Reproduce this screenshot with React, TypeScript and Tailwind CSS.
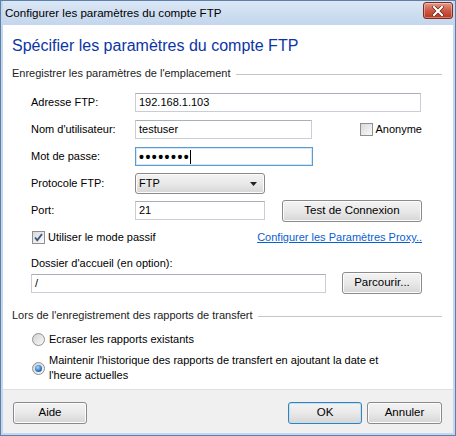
import React from "react";

const font = "font-['Liberation_Sans',Arial,sans-serif]";

function TextBox({ w, value, focused }: { w: string; value?: React.ReactNode; focused?: boolean }) {
  return (
    <div
      className={`${w} h-[19px] flex items-center px-[3px] bg-white border ${
        focused ? "border-[#5a9bd5] shadow-[inset_0_0_0_1px_#d6e8f7]" : "border-[#c9ced6] border-t-[#abb0b8]"
      }`}
    >
      {value}
    </div>
  );
}

function Button({ w, h = "h-[22px]", children, primary }: { w: string; h?: string; children: React.ReactNode; primary?: boolean }) {
  return (
    <button
      className={`${w} ${h} flex items-center justify-center rounded-[3px] border ${
        primary ? "border-[#3c7fb1] shadow-[inset_0_0_0_1px_#bfe1f7]" : "border-[#8a8a8a] shadow-[inset_0_0_0_1px_#fcfcfc]"
      } bg-gradient-to-b from-[#f3f3f3] via-[#e9e9e9] to-[#d6d6d6] text-[11.5px] text-black`}
    >
      {children}
    </button>
  );
}

function CheckBox({ checked }: { checked?: boolean }) {
  return (
    <span className="w-[13px] h-[13px] shrink-0 border border-[#8f8f8f] bg-gradient-to-br from-[#d9d9d9] to-[#fbfbfb] flex items-center justify-center">
      {checked && (
        <svg width="11" height="11" viewBox="0 0 11 11">
          <path d="M2 5.5 L4.3 8.2 L9 2" fill="none" stroke="#3b5488" strokeWidth="1.8" />
        </svg>
      )}
    </span>
  );
}

function Radio({ checked }: { checked?: boolean }) {
  return (
    <span className="w-[13px] h-[13px] shrink-0 rounded-full border border-[#8f8f8f] bg-gradient-to-br from-[#d2d2d2] to-[#fafafa] flex items-center justify-center">
      {checked && (
        <span className="w-[7px] h-[7px] rounded-full bg-[radial-gradient(circle_at_40%_35%,#a8dcff,#2f7cc9_55%,#0d3f86)]" />
      )}
    </span>
  );
}

function SectionHeader({ children }: { children: React.ReactNode }) {
  return (
    <div className="flex items-center pl-[9px] pr-[11px] leading-[14px] text-[#222]">
      <span>{children}</span>
      <span className="flex-1 ml-[5px] mt-[2px] h-px bg-[#c6c6c6]" />
    </div>
  );
}

function Row({ label, children }: { label: string; children: React.ReactNode }) {
  return (
    <div className="h-[27px] flex items-center">
      <span className="w-[104px] shrink-0">{label}</span>
      {children}
    </div>
  );
}

export default function App() {
  return (
    <div className={`${font} w-[456px] h-[436px] flex flex-col bg-[#c4d7ee] border border-[#5d7fa8] px-[2px] pb-[2px] text-[11px] text-black`}>
      {/* title bar */}
      <div className="h-[24px] shrink-0 flex items-center justify-between pl-[2px] bg-gradient-to-b from-[#dbe7f5] to-[#c3d6ed]">
        <span className="text-[11.6px] leading-[14px] mt-[-1px]">Configurer les paramètres du compte FTP</span>
        <div className="w-[30px] h-[17px] mb-[5px] rounded-[3px] border border-[#7b2d22] bg-gradient-to-b from-[#e3998a] via-[#cc5a45] to-[#b9351f] flex items-center justify-center shadow-[inset_0_0_0_1px_rgba(255,255,255,0.35)]">
          <svg width="12" height="10" viewBox="0 0 12 10">
            <path d="M2 1 L10 9 M10 1 L2 9" stroke="#5a1a10" strokeWidth="3.4" strokeLinecap="square" />
            <path d="M2 1 L10 9 M10 1 L2 9" stroke="#ffffff" strokeWidth="2.2" strokeLinecap="square" />
          </svg>
        </div>
      </div>

      {/* content */}
      <div className="flex-1 flex flex-col bg-white">
        <h1 className="mt-[11px] pl-[9px] text-[16px] leading-[20px] text-[#0c35a6]">Spécifier les paramètres du compte FTP</h1>

        <div className="mt-[10px]">
          <SectionHeader>Enregistrer les paramètres de l'emplacement</SectionHeader>
        </div>

        <div className="mt-[9px] pl-[28px] pr-[31px] flex flex-col">
          <Row label="Adresse FTP:">
            <TextBox w="w-[286px]" value="192.168.1.103" />
          </Row>
          <Row label="Nom d'utilisateur:">
            <TextBox w="w-[178px]" value="testuser" />
            <span className="ml-[48px] flex items-center gap-[3px]">
              <CheckBox />
              <span>Anonyme</span>
            </span>
          </Row>
          <Row label="Mot de passe:">
            <TextBox
              w="w-[178px]"
              focused
              value={
                <span className="flex items-center">
                  <span className="text-[14px] font-bold tracking-[1.5px] leading-[14px]">••••••••</span>
                  <span className="w-px h-[14px] bg-black" />
                </span>
              }
            />
          </Row>
          <Row label="Protocole FTP:">
            <div className="w-[130px] h-[21px] flex items-center justify-between pl-[3px] pr-[7px] rounded-[3px] border border-[#8a8a8a] shadow-[inset_0_0_0_1px_#fcfcfc] bg-gradient-to-b from-[#f3f3f3] via-[#e9e9e9] to-[#d6d6d6]">
              <span>FTP</span>
              <svg width="7" height="4" viewBox="0 0 7 4">
                <path d="M0 0 H7 L3.5 4 Z" fill="#222" />
              </svg>
            </div>
          </Row>
          <Row label="Port:">
            <TextBox w="w-[130px]" value="21" />
            <div className="ml-[17px]">
              <Button w="w-[140px]">Test de Connexion</Button>
            </div>
          </Row>
          <div className="h-[27px] flex items-center justify-between">
            <span className="ml-[1px] flex items-center gap-[3px]">
              <CheckBox checked />
              <span>Utiliser le mode passif</span>
            </span>
            <a className="text-[#0a5fd1] underline">Configurer les Paramètres Proxy..</a>
          </div>

          <span className="mt-[5px] leading-[14px]">Dossier d'accueil (en option):</span>
          <div className="mt-[2px] h-[22px] flex items-center justify-between">
            <TextBox w="w-[295px]" value="/" />
            <Button w="w-[80px]">Parcourir...</Button>
          </div>
        </div>

        <div className="mt-[14px]">
          <SectionHeader>Lors de l'enregistrement des rapports de transfert</SectionHeader>
        </div>

        <div className="pl-[29px] flex flex-col">
          <div className="mt-[10px] h-[14px] flex items-center gap-[4px]">
            <Radio />
            <span>Ecraser les rapports existants</span>
          </div>
          <div className="mt-[7px] flex items-center gap-[4px]">
            <Radio checked />
            <span className="leading-[15px]">
              Maintenir l'historique des rapports de transfert en ajoutant la date et
              <br />
              l'heure actuelles
            </span>
          </div>
        </div>
      </div>

      {/* footer */}
      <div className="h-[44px] shrink-0 border-t border-[#dfdfdf] bg-[#f0f0f0] flex items-start justify-between pt-[12px] pl-[10px] pr-[11px]">
        <Button w="w-[74px]">Aide</Button>
        <div className="flex gap-[5px]">
          <Button w="w-[74px]" primary>OK</Button>
          <Button w="w-[75px]">Annuler</Button>
        </div>
      </div>
    </div>
  );
}
